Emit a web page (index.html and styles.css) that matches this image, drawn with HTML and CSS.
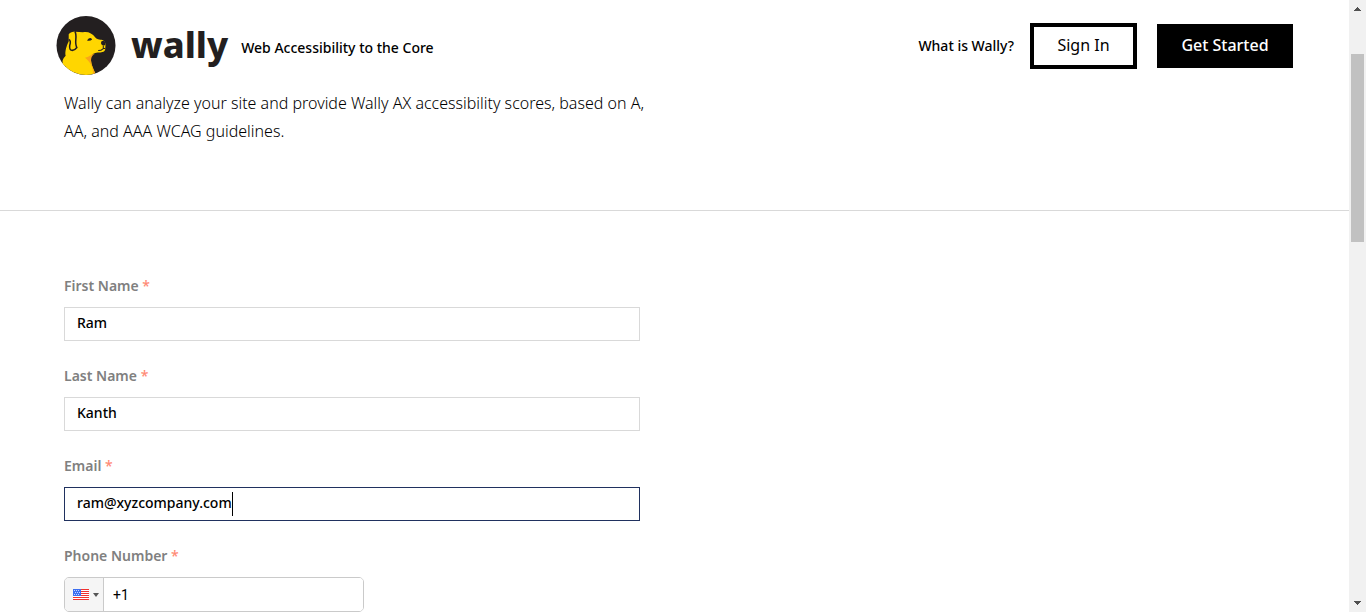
FILE: index.html
```html
<!DOCTYPE html>
<html lang="en">
<head>
<meta charset="utf-8">
<title>Wally - Web Accessibility to the Core</title>
<link rel="stylesheet" href="styles.css">
</head>
<body>
<div class="page">
  <header class="header">
    <a class="brand" href="#">
      <svg class="brand-mark" viewBox="0 0 58 58" aria-hidden="true">
        <circle cx="29" cy="29" r="29" fill="#231f20"/>
        <path d="M12 18C15 14 21 16 26 16C31 15 35 17 38 21C40 24 44 23 46 24C49 26 48 29 48 32C48 35 45 36 42 36C38 36 35 37 34 40C33 45 36 51 38 56Q34 58 29 58Q16 58 7 48C5 45 6 42 9 39C8 35 10 29 12 25Z" fill="#ffd600"/>
        <path d="M28 41C33 40 34 37 38 37C35 38 34 41 34 44C34 48 36 52 38 56L36 57C36 50 33 45 28 41Z" fill="#f9a51a"/>
        <path d="M18 15C21 20 17 26 20 31C17 35 12 35 13 29C14 26 14 24 12 23" fill="#ffd600" stroke="#231f20" stroke-width="1.5"/>
        <path d="M30 24Q33 20 35 23Q33 25 30 24Z" fill="#231f20"/>
        <path d="M44 25Q48 23 48 28Q48 29 46 29Q43 28 44 25Z" fill="#231f20"/>
        <path d="M46 29L46 32Q44 34 41 34M46 32L48 32" fill="none" stroke="#231f20" stroke-width="1"/>
      </svg>
      <span class="brand-name">wally</span>
    </a>
    <span class="tagline">Web Accessibility to the Core</span>
    <nav class="nav">
      <a class="nav-link" href="#">What is Wally?</a>
      <button class="button" type="button">Sign In</button>
      <button class="button button-solid" type="button">Get Started</button>
    </nav>
  </header>
  <section class="intro">
    <p class="intro-text">Wally can analyze your site and provide Wally AX accessibility scores, based on A, AA, and AAA WCAG guidelines.</p>
  </section>
  <form class="form">
    <div class="field">
      <label class="label" for="first">First Name <span class="star">*</span></label>
      <div class="box"><input class="input" id="first" type="text" value="Ram"></div>
    </div>
    <div class="field">
      <label class="label" for="last">Last Name <span class="star">*</span></label>
      <div class="box"><input class="input" id="last" type="text" value="Kanth"></div>
    </div>
    <div class="field">
      <label class="label" for="email">Email <span class="star">*</span></label>
      <div class="box box-active"><input class="input input-fit" id="email" type="text" value="ram@xyzcompany.com"><span class="caret"></span></div>
    </div>
    <div class="field">
      <label class="label" for="phone">Phone Number <span class="star">*</span></label>
      <div class="phone">
        <button class="country" type="button" aria-label="Country: United States">
          <svg width="16" height="11" viewBox="0 0 16 11" aria-hidden="true">
            <path fill="#fff" d="M0 0h16v11H0z"/>
            <path fill="#f0332f" d="M0 0h16v1H0zM0 2h16v1H0zM0 4h16v1H0zM0 6h16v1H0zM0 8h16v1H0zM0 10h16v1H0z"/>
            <path fill="#3d6ff0" d="M0 0h8v7H0z"/>
            <path fill="#c5d5ff" d="M1 1h1v1H1zM3 1h1v1H3zM5 1h1v1H5zM2 3h1v1H2zM4 3h1v1H4zM6 3h1v1H6zM1 5h1v1H1zM3 5h1v1H3zM5 5h1v1H5z"/>
          </svg>
          <svg width="6" height="4" viewBox="0 0 6 4" aria-hidden="true"><path fill="#555" d="M0 0h6L3 4z"/></svg>
        </button>
        <input class="phone-input" id="phone" type="tel" value="+1">
      </div>
    </div>
  </form>
</div>
<div class="scrollbar" aria-hidden="true">
  <svg width="7" height="4" viewBox="0 0 7 4" shape-rendering="crispEdges"><path fill="#505050" d="M0 4h7v-1H6v-1H5v-1H4v-1H3v1H2v1H1v1H0z"/></svg>
  <div class="track"><div class="thumb"></div></div>
  <svg width="7" height="4" viewBox="0 0 7 4" shape-rendering="crispEdges"><path fill="#505050" d="M0 0h7v1H6v1H5v1H4v1H3v-1H2v-1H1v-1H0z"/></svg>
</div>
</body>
</html>
```
FILE: styles.css
```css
* { box-sizing: border-box; }
body {
  margin: 0;
  height: 100vh;
  overflow: hidden;
  display: flex;
  background: #fff;
  color: #000;
  font-family: "Noto Sans", "Open Sans", sans-serif;
  font-size: 14px;
}
button, input { font: inherit; color: inherit; }
.page { flex: 1; min-width: 0; }
.header {
  display: flex;
  align-items: center;
  height: 91px;
  padding: 0 56px;
}
.brand {
  display: flex;
  align-items: center;
  gap: 15px;
  color: #231f20;
  text-decoration: none;
}
.brand-mark { width: 60px; height: 59px; }
.brand-name { font-size: 36px; font-weight: 800; line-height: 48px; padding-bottom: 2px; }
.tagline { margin-left: 13px; padding-top: 4px; font-weight: 500; }
.nav { display: flex; align-items: center; margin-left: auto; }
.nav-link { margin-right: 16px; color: #000; font-weight: 500; text-decoration: none; }
.button {
  width: 107px;
  height: 46px;
  padding: 0 0 2px;
  border: 4px solid #000;
  background: #fff;
  font-size: 16px;
}
.button-solid {
  width: 136px;
  height: 44px;
  margin-left: 20px;
  background: #000;
  color: #fff;
  font-weight: 500;
}
.intro { height: 120px; padding: 0 64px; border-bottom: 1px solid #d9d9d9; }
.intro-text { max-width: 600px; margin: -2px 0 0; font-size: 16px; font-weight: 300; line-height: 28px; }
.intro { display: flow-root; }
.form { display: flex; flex-direction: column; gap: 23px; padding: 63px 64px 0; }
.label { display: block; margin-bottom: 9px; color: #808080; font-weight: 600; line-height: 24px; }
.star { color: #ff8a75; font-weight: 500; }
.box {
  display: flex;
  align-items: center;
  width: 100%;
  max-width: 576px;
  height: 34px;
  padding: 0 12px;
  border: 1px solid #d9d9d9;
}
.box-active { border-color: #20315f; }
.input { flex: 1; height: 30px; padding: 0 0 4px; border: 0; outline: 0; background: none; font-weight: 500; }
.input-fit { flex: none; field-sizing: content; }
.caret { width: 1px; height: 24px; background: #000; }
.phone {
  display: flex;
  width: 300px;
  height: 35px;
  border: 1px solid #cacaca;
  border-radius: 5px;
  overflow: hidden;
}
.country {
  display: flex;
  align-items: center;
  justify-content: center;
  gap: 4px;
  width: 39px;
  padding: 0 0 0 4px;
  border: 0;
  border-right: 1px solid #cacaca;
  background: #f5f5f5;
}
.phone-input { flex: 1; min-width: 0; padding: 0 9px; border: 0; outline: 0; font-family: Roboto, sans-serif; }
.scrollbar {
  display: flex;
  flex-direction: column;
  align-items: center;
  width: 17px;
  padding: 7px 0;
  background: #f1f1f1;
}
.track { flex: 1; padding-top: 43px; }
.thumb { width: 13px; height: 188px; background: #c1c1c1; }
```
